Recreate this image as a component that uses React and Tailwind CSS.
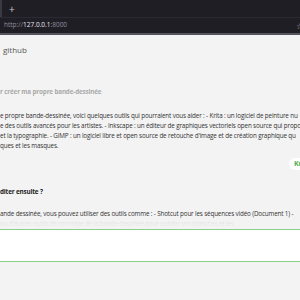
export default function App() {
  return (
    <div className="relative w-[300px] h-[300px] overflow-hidden bg-[#f3f3f3] font-['Open_Sans',sans-serif]">
      {/* browser chrome */}
      <div className="flex h-[17px] items-center bg-[#1f1e25]">
        <div className="h-full w-[2px] bg-[#3a3944]" />
        <span className="ml-[7px] text-[10px] leading-none text-[#d0d0d6]">+</span>
      </div>
      <div className="h-px bg-[#2b2a33]" />
      <div className="flex h-[15px] items-center justify-between bg-[#1f1e25] pl-[4px]">
        <span className="text-[6.5px] leading-none text-[#8f8f9d]">
          http://<span className="text-[#e8e8ee]">127.0.0.1</span>:8000
        </span>
        <span className="mr-[-3px] text-[8px] leading-none text-[#b5b5bd]">☆</span>
      </div>
      <div className="h-[2px] bg-[#55545e]" />

      {/* page */}
      <div className="flex flex-col text-[6.3px] tracking-[-0.15px] leading-[10px] text-[#333] whitespace-nowrap">
        <div className="mt-[9px] h-[12px] pl-[3px] text-[8px] leading-[12px] tracking-normal text-[#555]">github</div>
        <div className="mt-[31px] h-[10px] font-bold text-[#aaa]">r créer ma propre bande-dessinée</div>
        <div className="mt-[14px] flex flex-col">
          <span className="h-[10px]">e propre bande-dessinée, voici quelques outils qui pourraient vous aider : - Krita : un logiciel de peinture nu</span>
          <span className="h-[10px]">e des outils avancés pour les artistes. - Inkscape : un éditeur de graphiques vectoriels open source qui propo</span>
          <span className="h-[10px]">et la typographie. - GIMP : un logiciel libre et open source de retouche d'image et de création graphique qu</span>
          <span className="h-[10px]">ques et les masques.</span>
        </div>
        <div className="mt-[7px] flex justify-end">
          <div className="mr-[-8px] flex h-[12px] w-[19px] items-center rounded-l-full bg-white pl-[5px] text-[7px] font-bold text-[#4caf50]">Kr</div>
        </div>
        <div className="mt-[17px] h-[10px] font-bold text-[#222]">diter ensuite ?</div>
        <div className="mt-[12px] flex flex-col">
          <span className="h-[10px]">ande dessinée, vous pouvez utiliser des outils comme : - Shotcut pour les séquences vidéo (Document 1) -</span>
          <span className="h-[10px] text-[#ccc]">ou d'autres outils de montage de la bande dessinée pour publier vos planches et les</span>
        </div>
      </div>

      {/* fade over last line */}
      <div className="absolute left-0 right-0 top-[219px] h-[11px] bg-gradient-to-b from-[#f3f3f3]/40 to-[#f3f3f3]" />

      {/* input */}
      <div className="absolute left-0 right-0 top-[229px] h-[33px] border-y border-[#88d08b] bg-white" />
    </div>
  );
}
